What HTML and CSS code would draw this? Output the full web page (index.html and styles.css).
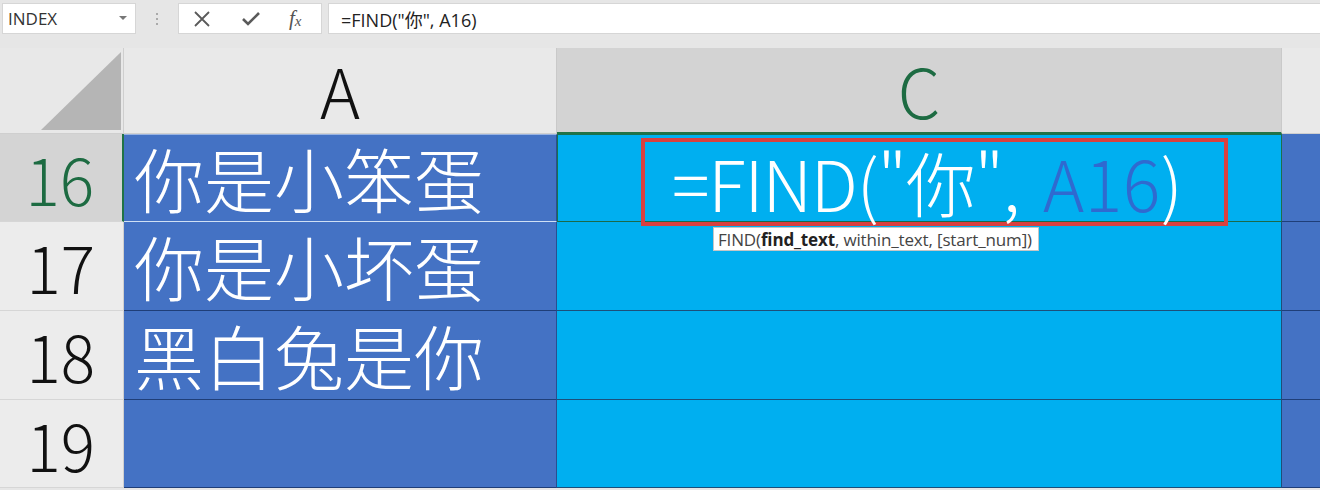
FILE: index.html
```html
<!DOCTYPE html>
<html lang="zh">
<head>
<meta charset="utf-8">
<title>FIND</title>
<link rel="stylesheet" href="styles.css">
</head>
<body>
<div class="toolbar">
  <div class="namebox">
    <span class="name">INDEX</span>
    <svg class="caret" width="8" height="5" viewBox="0 0 8 5"><path d="M0 0h8L4 4z" fill="#777"/></svg>
  </div>
  <div class="sep"><i></i><i></i><i></i></div>
  <div class="tools">
    <svg class="ic-x" width="18" height="18" viewBox="0 0 18 18"><path d="M2 2l14 14M16 2L2 16" stroke="#5a5a5a" stroke-width="1.8" fill="none"/></svg>
    <svg class="ic-ok" width="20" height="18" viewBox="0 0 20 18"><path d="M2 9l5 5L18 3" stroke="#5a5a5a" stroke-width="2.6" fill="none"/></svg>
    <span class="fx">f<sub>x</sub></span>
  </div>
  <div class="formula">=FIND("你", A16)</div>
</div>
<div class="sheet">
  <div class="corner"><svg width="80" height="80" viewBox="0 0 80 80"><path d="M80 0V78H0z" fill="#b5b5b5"/></svg></div>
  <div class="colhead">A</div>
  <div class="colhead sel">C</div>
  <div class="colhead rest"></div>

  <div class="rowhead sel">16</div>
  <div class="cellA first">你是小笨蛋</div>
  <div class="cellC active">
    <div class="redbox"><span class="fn">=FIND("你",</span><span class="ref">A16</span>)</div>
    <div class="tip">FIND(<b>find_text</b>, within_text, [start_num])</div>
  </div>
  <div class="cellR"></div>

  <div class="rowhead">17</div>
  <div class="cellA">你是小坏蛋</div>
  <div class="cellC"></div>
  <div class="cellR"></div>

  <div class="rowhead">18</div>
  <div class="cellA">黑白兔是你</div>
  <div class="cellC"></div>
  <div class="cellR"></div>

  <div class="rowhead">19</div>
  <div class="cellA"></div>
  <div class="cellC"></div>
  <div class="cellR"></div>
</div>
</body>
</html>
```

FILE: styles.css
```css
* { box-sizing: border-box; }
html, body { margin: 0; padding: 0; }
body {
  width: 1320px;
  height: 490px;
  overflow: hidden;
  background: #e6e6e6;
  font-family: "Noto Sans CJK SC", "Noto Sans", sans-serif;
}
.toolbar {
  height: 36px;
  display: flex;
  align-items: center;
  padding: 3px 0 2px 2px;
  background: #e6e6e6;
}
.namebox {
  width: 134px;
  height: 31px;
  background: #fff;
  border: 1px solid #d6d6d6;
  display: flex;
  align-items: center;
  justify-content: space-between;
  padding: 0 8px 0 5px;
}
.name {
  font-family: "Open Sans", "Liberation Sans", sans-serif;
  font-size: 17px;
  color: #333;
}
.sep {
  width: 42px;
  display: flex;
  flex-direction: column;
  align-items: center;
  gap: 3px;
}
.sep i { display: block; width: 2px; height: 2px; background: #aaa; }
.tools {
  width: 144px;
  height: 31px;
  background: #fff;
  border: 1px solid #d6d6d6;
  display: flex;
  align-items: center;
  padding: 0 0 0 14px;
  gap: 0;
}
.ic-x { margin-right: 30px; }
.ic-ok { margin-right: 28px; }
.fx {
  font-family: "Liberation Serif", serif;
  font-style: italic;
  font-size: 21px;
  color: #555;
  line-height: 1;
}
.fx sub { font-size: 15px; vertical-align: -1px; }
.formula {
  flex: 1;
  margin-left: 6px;
  height: 31px;
  background: #fff;
  border: 1px solid #d6d6d6;
  border-right: none;
  display: flex;
  align-items: center;
  padding-left: 12px;
  font-family: "Open Sans", "Noto Sans CJK SC", sans-serif;
  font-size: 18px;
  color: #222;
}
.sheet {
  margin-top: 12px;
  display: grid;
  grid-template-columns: 124px 433px 725px 38px;
  grid-template-rows: 86px 88px 89px 89px 88px;
}
.corner {
  background: #e8e8e8;
  border-right: 1px solid #cfcfcf;
  border-bottom: 1px solid #cfcfcf;
  display: flex;
  align-items: flex-end;
  justify-content: flex-end;
  padding: 0 2px 1px 0;
}
.colhead {
  background: #e9e9e9;
  border-right: 1px solid #c9c9c9;
  border-bottom: 1px solid #cfcfcf;
  display: flex;
  align-items: center;
  justify-content: center;
  font-size: 68px;
  font-weight: 300;
  color: #111;
  padding-bottom: 2px;
}
.colhead.sel {
  background: #d3d3d3;
  color: #1d6b42;
  border-bottom: 2px solid #217346;
}
.colhead.rest { background: #e9e9e9; border-right: none; }
.rowhead {
  background: #ececec;
  border-right: 1px solid #cfcfcf;
  border-bottom: 1px solid #d6d6d6;
  display: flex;
  align-items: center;
  justify-content: flex-end;
  padding-right: 28px;
  font-size: 64px;
  font-weight: 300;
  color: #111;
}
.rowhead.sel {
  background: #d4d4d4;
  color: #1d6b42;
  border-right: 2px solid #217346;
}
.cellA {
  background: #4472c4;
  border-bottom: 1px solid #1f3e78;
  border-right: 1px solid #2a4f8f;
  color: #fff;
  font-size: 70px;
  font-weight: 300;
  display: flex;
  align-items: center;
  padding-left: 10px;
  line-height: 1;
}
.cellA.first { border-top: 1px solid #9ab4e2; border-bottom: 1px solid #cfe0f5; }
.cellC {
  background: #00aff0;
  border-bottom: 1px solid #1c4f7a;
  border-right: 1px solid #1c4f7a;
}
.cellC.active {
  position: relative;
  border: 1px solid #1a7050;
  border-bottom: 1px solid #1a6a4a;
  display: flex;
  justify-content: center;
  align-items: flex-start;
  z-index: 2;
}
.cellR {
  background: #4472c4;
  border-bottom: 1px solid #1f3e78;
}
.redbox {
  margin-top: 3px;
  margin-left: 30px;
  width: 587px;
  height: 88px;
  border: 4px solid #d9403f;
  display: flex;
  align-items: center;
  padding-left: 27px;
  color: #fff;
  font-size: 70px;
  font-weight: 300;
  line-height: 1;
  white-space: nowrap;
  letter-spacing: 0.5px;
}
.fn { letter-spacing: -1.1px; }
.ref { color: #2f6ad0; margin-left: 24px; }
.tip {
  position: absolute;
  left: 155px;
  top: 92px;
  height: 24px;
  padding: 0 6px 0 4px;
  background: #fff;
  border: 1px solid #c6c6c6;
  font-family: "Open Sans", "Liberation Sans", sans-serif;
  font-size: 17px;
  letter-spacing: -0.15px;
  color: #444;
  display: flex;
  align-items: center;
  white-space: nowrap;
}
.tip b { color: #222; }
```
